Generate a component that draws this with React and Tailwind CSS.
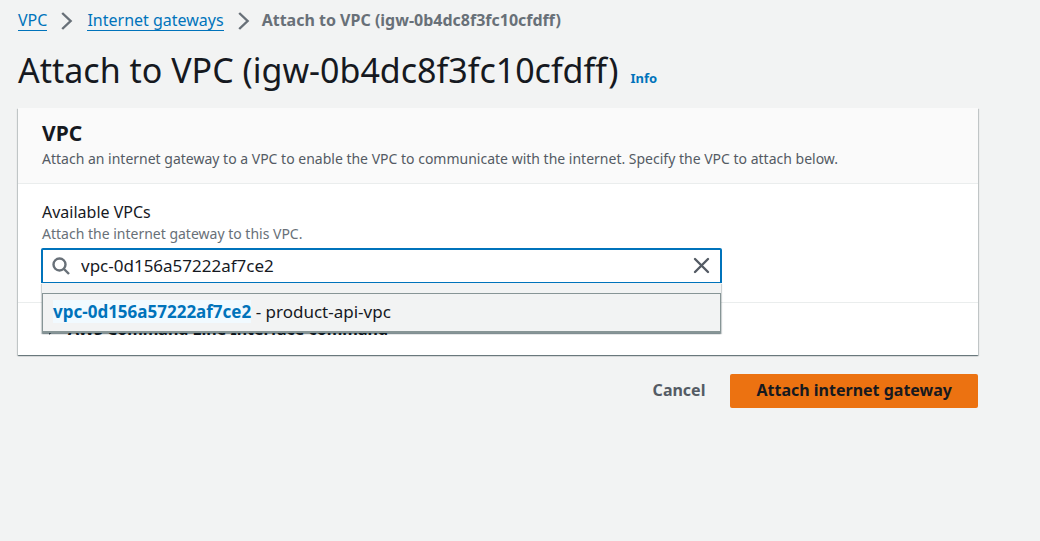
import { useState } from "react";

function Chevron() {
  return (
    <svg className="h-5 w-3 shrink-0" viewBox="0 0 12 20" fill="none" stroke="#687078" strokeWidth="2.4" aria-hidden="true">
      <path d="M1.2 3 9.6 11 1.2 19" />
    </svg>
  );
}

function Breadcrumbs() {
  return (
    <nav aria-label="Breadcrumbs">
      <ol className="flex items-start gap-3.5 text-base leading-5">
        <li className="flex">
          <a href="#vpc" className="border-b border-[#0073bb] text-[#0073bb]">VPC</a>
        </li>
        <li className="flex items-start gap-3.5">
          <Chevron />
          <a href="#gateways" className="border-b border-[#0073bb] text-[#0073bb]">Internet gateways</a>
        </li>
        <li className="flex items-start gap-3 font-bold text-[#687078]">
          <Chevron />
          <span aria-current="page">Attach to VPC (igw-0b4dc8f3fc10cfdff)</span>
        </li>
      </ol>
    </nav>
  );
}

function VpcPicker() {
  const [value, setValue] = useState("vpc-0d156a57222af7ce2");
  return (
    <div className="flex max-w-[679px] flex-col">
      <label htmlFor="vpc" className="text-base leading-6">Available VPCs</label>
      <p id="vpc-hint" className="text-sm leading-5 text-[#687078]">Attach the internet gateway to this VPC.</p>
      <div className="relative -mx-px mt-1">
        <div className="flex h-[35px] items-center gap-2.5 rounded-t-xs border-2 border-b border-[#0073bb] bg-white px-2">
          <svg className="size-5 shrink-0" viewBox="0 0 20 20" fill="none" stroke="#687078" strokeWidth="2.4" aria-hidden="true">
            <circle cx="8.5" cy="8.5" r="6" />
            <path d="M13 13 18 18" />
          </svg>
          <input
            id="vpc"
            type="text"
            aria-describedby="vpc-hint"
            value={value}
            onChange={(e) => setValue(e.target.value)}
            className="min-w-0 flex-1 bg-transparent text-[17px] leading-6 outline-none"
          />
          <button type="button" aria-label="Clear" onClick={() => setValue("")} className="shrink-0">
            <svg className="size-5" viewBox="0 0 20 20" fill="none" stroke="#545b64" strokeWidth="2.4" strokeLinecap="round" aria-hidden="true">
              <path d="M3 3 16 16M16 3 3 16" />
            </svg>
          </button>
        </div>
        <div className="absolute inset-x-px top-full z-10 bg-[#f2f3f3] pt-2.5 shadow-[0_1px_1px_rgba(0,28,36,0.3),1px_1px_1px_rgba(0,28,36,0.15),-1px_1px_1px_rgba(0,28,36,0.15)]">
          <ul role="listbox" aria-label="Available VPCs">
            <li role="option" aria-selected="true" className="border border-b-2 border-[#879596] px-2.5 pt-1.5 pb-[7px] text-[17px] leading-6">
              <strong className="bg-[#f1faff] text-[#0073bb]">vpc-0d156a57222af7ce2</strong> - product-api-vpc
            </li>
          </ul>
        </div>
      </div>
    </div>
  );
}

export default function App() {
  return (
    <main className="min-h-screen bg-[#f2f3f3] pt-2.5 pr-[62px] pl-[18px] font-['Noto_Sans',sans-serif] text-[#16191f]">
      <Breadcrumbs />
      <header className="flex items-baseline gap-3 pt-4 pb-[15px]">
        <h1 className="text-[34px] leading-[46px]">Attach to VPC (igw-0b4dc8f3fc10cfdff)</h1>
        <a href="#info" className="text-[13px] font-bold text-[#0073bb]">Info</a>
      </header>
      <section className="bg-white shadow-[0_1px_1px_rgba(0,28,36,0.4),1px_1px_1px_rgba(0,28,36,0.15),-1px_1px_1px_rgba(0,28,36,0.15)]">
        <header className="border-b border-[#eaeded] bg-[#fafafa] px-6 pt-[11px] pb-3.5">
          <h2 className="text-[21px] leading-7 font-bold">VPC</h2>
          <p className="mt-0.5 text-sm leading-5 text-[#545b64]">
            Attach an internet gateway to a VPC to enable the VPC to communicate with the internet. Specify the VPC to attach below.
          </p>
        </header>
        <div className="px-6 pt-4 pb-[19px]">
          <VpcPicker />
        </div>
        <details className="border-t border-[#eaeded] px-6 py-3.5">
          <summary className="flex cursor-pointer list-none items-center gap-2.5 text-base leading-6 font-bold">
            <svg className="ml-1 size-3" viewBox="0 0 12 12" fill="#545b64" aria-hidden="true">
              <path d="M3 0v12l7-6z" />
            </svg>
            AWS Command Line Interface command
          </summary>
        </details>
      </section>
      <div className="flex justify-end gap-1 pt-[19px]">
        <button type="button" className="px-[21px] pt-1 pb-1.5 text-base leading-6 font-bold text-[#545b64]">Cancel</button>
        <button type="button" className="rounded-xs bg-[#ec7211] px-[26px] pt-1 pb-1.5 text-base leading-6 font-bold text-[#16191f]">
          Attach internet gateway
        </button>
      </div>
    </main>
  );
}
